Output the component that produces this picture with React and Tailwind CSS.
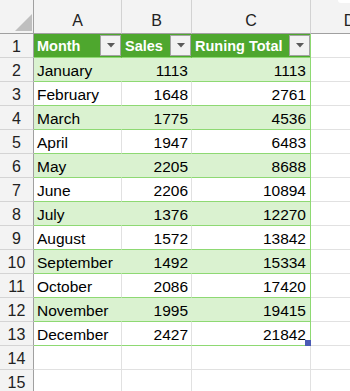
import React from 'react'

const data = [
  ['January', 1113, 1113],
  ['February', 1648, 2761],
  ['March', 1775, 4536],
  ['April', 1947, 6483],
  ['May', 2205, 8688],
  ['June', 2206, 10894],
  ['July', 1376, 12270],
  ['August', 1572, 13842],
  ['September', 1492, 15334],
  ['October', 2086, 17420],
  ['November', 1995, 19415],
  ['December', 2427, 21842],
]

function FilterButton() {
  return (
    <div className="mt-[1px] flex h-[21px] w-[21px] shrink-0 items-center justify-center self-start border border-[#a3a3a3] bg-[#f2f2f2]">
      <svg width="8" height="5" viewBox="0 0 8 5">
        <path d="M0 0 H8 L4 4.5 Z" fill="#5a5a5a" />
      </svg>
    </div>
  )
}

function RowNum({ n }) {
  return (
    <div className="flex w-[34px] shrink-0 items-center justify-center border-r border-b border-r-[#a0a0a0] border-b-[#d4d4d4] bg-[#f3f3f3] pt-[2px] text-[16px] text-[#222]">
      {n}
    </div>
  )
}

export default function App() {
  return (
    <div className="relative h-[391px] w-[350px] overflow-hidden bg-white font-['Liberation_Sans',Arial,sans-serif] text-[15.5px] leading-none text-black">
      {/* column letters */}
      <div className="flex h-[34px]">
        <div className="flex w-[34px] shrink-0 items-end justify-end border-r border-b border-[#a0a0a0] bg-[#f3f3f3] pr-[1px] pb-[2px]">
          <svg width="17" height="17" viewBox="0 0 17 17">
            <path d="M17 0 V17 H0 Z" fill="#bfbfbf" />
          </svg>
        </div>
        {[
          ['A', 'w-[88px]'],
          ['B', 'w-[70px]'],
          ['C', 'w-[119px]'],
          ['D', 'w-[78px]'],
        ].map(([l, w]) => (
          <div
            key={l}
            className={`${w} flex shrink-0 items-end justify-center border-r border-b border-r-[#d2d2d2] border-b-[#a0a0a0] bg-[#f3f3f3] pb-[4px] text-[16px] text-[#222]`}
          >
            {l}
          </div>
        ))}
      </div>

      {/* table header */}
      <div className="flex h-[24px] text-[14.5px]">
        <RowNum n={1} />
        <div className="flex w-[88px] shrink-0 items-center justify-between border-r border-b border-r-[#4ea72e] border-b-[#8ed973] bg-[#4ea72e] pl-[3px] font-bold text-white">
          <span className="pt-[2px]">Month</span>
          <FilterButton />
        </div>
        <div className="flex w-[70px] shrink-0 items-center justify-between border-r border-b border-r-[#4ea72e] border-b-[#8ed973] bg-[#4ea72e] pl-[3px] font-bold text-white">
          <span className="pt-[2px]">Sales</span>
          <FilterButton />
        </div>
        <div className="flex w-[119px] shrink-0 items-center justify-between border-r border-b border-r-[#8ed973] border-b-[#8ed973] bg-[#4ea72e] pl-[3px] font-bold text-white">
          <span className="pt-[2px]">Runing Total</span>
          <FilterButton />
        </div>
        <div className="w-[78px] shrink-0 border-r border-b border-[#e1e1e1]" />
      </div>

      {data.map(([month, sales, total], i) => {
        const banded = i % 2 === 0
        const bg = banded ? 'bg-[#daf2d0] border-r-[#daf2d0]' : 'bg-white border-r-[#e1e1e1]'
        const last = i === data.length - 1
        return (
          <div key={month} className="flex h-[24px]">
            <RowNum n={i + 2} />
            <div className={`flex w-[88px] shrink-0 items-center border-r border-b border-b-[#8ed973] pt-[2px] pl-[3px] ${bg}`}>
              {month}
            </div>
            <div className={`flex w-[70px] shrink-0 items-center justify-end border-r border-b border-b-[#8ed973] pt-[2px] pr-[3px] ${bg}`}>
              {sales}
            </div>
            <div
              className={`relative flex w-[119px] shrink-0 items-center justify-end border-r border-b border-r-[#8ed973] border-b-[#8ed973] pt-[2px] pr-[4px] ${
                banded ? 'bg-[#daf2d0]' : 'bg-white'
              }`}
            >
              {total}
              {last && <div className="absolute right-[-1px] bottom-[-1px] h-[6px] w-[6px] bg-[#4a5bb4]" />}
            </div>
            <div className="w-[78px] shrink-0 border-r border-b border-[#e1e1e1]" />
          </div>
        )
      })}

      {[14, 15].map((n) => (
        <div key={n} className="flex h-[24px]">
          <RowNum n={n} />
          <div className="w-[88px] shrink-0 border-r border-b border-[#e1e1e1]" />
          <div className="w-[70px] shrink-0 border-r border-b border-[#e1e1e1]" />
          <div className="w-[119px] shrink-0 border-r border-b border-[#e1e1e1]" />
          <div className="w-[78px] shrink-0 border-r border-b border-[#e1e1e1]" />
        </div>
      ))}

      <div className="absolute top-[-3px] right-[-6px] h-[6px] w-[18px] rounded-[3px] bg-white" />
    </div>
  )
}
